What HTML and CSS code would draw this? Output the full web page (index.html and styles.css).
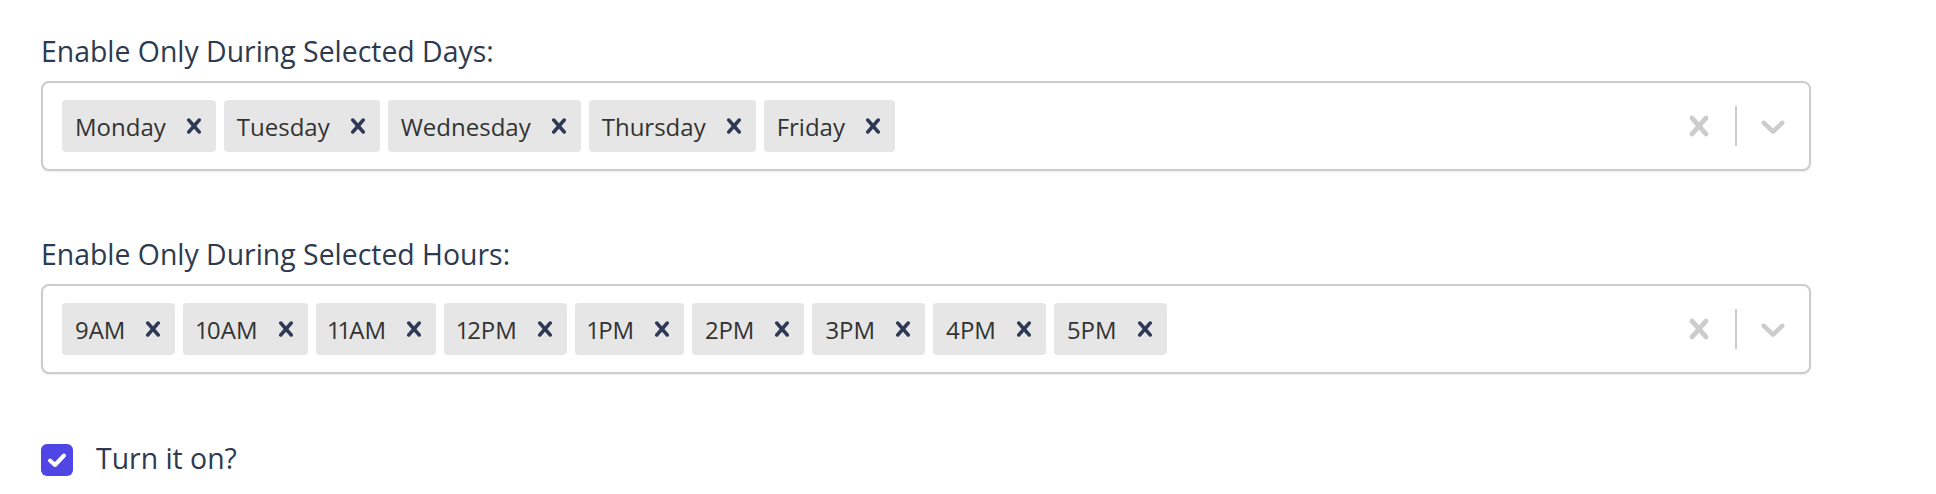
FILE: index.html
```html
<!DOCTYPE html>
<html lang="en">
<head>
    <meta charset="UTF-8">
    <meta name="viewport" content="width=device-width, initial-scale=1.0">
    <title>Schedule</title>
    <link rel="stylesheet" href="styles.css">
</head>
<body>

    <div class="form">
        <div class="field">
            <div class="field-label">Enable Only During Selected Days:</div>
            <div class="select">
                <div class="values">
                    <div class="chip"><span class="chip-label">Monday</span><span class="chip-remove"><svg viewBox="0 0 20 20"><path d="M14.348 14.849c-0.469 0.469-1.229 0.469-1.697 0l-2.651-3.030-2.651 3.029c-0.469 0.469-1.229 0.469-1.697 0-0.469-0.469-0.469-1.229 0-1.697l2.758-3.15-2.759-3.152c-0.469-0.469-0.469-1.228 0-1.697s1.228-0.469 1.697 0l2.652 3.031 2.651-3.031c0.469-0.469 1.228-0.469 1.697 0s0.469 1.229 0 1.697l-2.758 3.152 2.758 3.15c0.469 0.469 0.469 1.229 0 1.698z"/></svg></span></div>
                    <div class="chip"><span class="chip-label">Tuesday</span><span class="chip-remove"><svg viewBox="0 0 20 20"><path d="M14.348 14.849c-0.469 0.469-1.229 0.469-1.697 0l-2.651-3.030-2.651 3.029c-0.469 0.469-1.229 0.469-1.697 0-0.469-0.469-0.469-1.229 0-1.697l2.758-3.15-2.759-3.152c-0.469-0.469-0.469-1.228 0-1.697s1.228-0.469 1.697 0l2.652 3.031 2.651-3.031c0.469-0.469 1.228-0.469 1.697 0s0.469 1.229 0 1.697l-2.758 3.152 2.758 3.15c0.469 0.469 0.469 1.229 0 1.698z"/></svg></span></div>
                    <div class="chip"><span class="chip-label">Wednesday</span><span class="chip-remove"><svg viewBox="0 0 20 20"><path d="M14.348 14.849c-0.469 0.469-1.229 0.469-1.697 0l-2.651-3.030-2.651 3.029c-0.469 0.469-1.229 0.469-1.697 0-0.469-0.469-0.469-1.229 0-1.697l2.758-3.15-2.759-3.152c-0.469-0.469-0.469-1.228 0-1.697s1.228-0.469 1.697 0l2.652 3.031 2.651-3.031c0.469-0.469 1.228-0.469 1.697 0s0.469 1.229 0 1.697l-2.758 3.152 2.758 3.15c0.469 0.469 0.469 1.229 0 1.698z"/></svg></span></div>
                    <div class="chip"><span class="chip-label">Thursday</span><span class="chip-remove"><svg viewBox="0 0 20 20"><path d="M14.348 14.849c-0.469 0.469-1.229 0.469-1.697 0l-2.651-3.030-2.651 3.029c-0.469 0.469-1.229 0.469-1.697 0-0.469-0.469-0.469-1.229 0-1.697l2.758-3.15-2.759-3.152c-0.469-0.469-0.469-1.228 0-1.697s1.228-0.469 1.697 0l2.652 3.031 2.651-3.031c0.469-0.469 1.228-0.469 1.697 0s0.469 1.229 0 1.697l-2.758 3.152 2.758 3.15c0.469 0.469 0.469 1.229 0 1.698z"/></svg></span></div>
                    <div class="chip"><span class="chip-label">Friday</span><span class="chip-remove"><svg viewBox="0 0 20 20"><path d="M14.348 14.849c-0.469 0.469-1.229 0.469-1.697 0l-2.651-3.030-2.651 3.029c-0.469 0.469-1.229 0.469-1.697 0-0.469-0.469-0.469-1.229 0-1.697l2.758-3.15-2.759-3.152c-0.469-0.469-0.469-1.228 0-1.697s1.228-0.469 1.697 0l2.652 3.031 2.651-3.031c0.469-0.469 1.228-0.469 1.697 0s0.469 1.229 0 1.697l-2.758 3.152 2.758 3.15c0.469 0.469 0.469 1.229 0 1.698z"/></svg></span></div>
                </div>
                <div class="indicators">
                    <span class="indicator"><svg viewBox="0 0 20 20"><path d="M14.348 14.849c-0.469 0.469-1.229 0.469-1.697 0l-2.651-3.030-2.651 3.029c-0.469 0.469-1.229 0.469-1.697 0-0.469-0.469-0.469-1.229 0-1.697l2.758-3.15-2.759-3.152c-0.469-0.469-0.469-1.228 0-1.697s1.228-0.469 1.697 0l2.652 3.031 2.651-3.031c0.469-0.469 1.228-0.469 1.697 0s0.469 1.229 0 1.697l-2.758 3.152 2.758 3.15c0.469 0.469 0.469 1.229 0 1.698z"/></svg></span>
                    <span class="separator"></span>
                    <span class="indicator"><svg viewBox="0 0 20 20"><path d="M4.516 7.548c0.436-0.446 1.043-0.481 1.576 0l3.908 3.747 3.908-3.747c0.533-0.481 1.141-0.446 1.574 0 0.436 0.445 0.408 1.197 0 1.615-0.406 0.418-4.695 4.502-4.695 4.502-0.217 0.223-0.502 0.335-0.787 0.335s-0.57-0.112-0.789-0.335c0 0-4.287-4.084-4.695-4.502s-0.436-1.17 0-1.615z"/></svg></span>
                </div>
            </div>
        </div>

        <div class="field">
            <div class="field-label">Enable Only During Selected Hours:</div>
            <div class="select">
                <div class="values">
                    <div class="chip"><span class="chip-label">9AM</span><span class="chip-remove"><svg viewBox="0 0 20 20"><path d="M14.348 14.849c-0.469 0.469-1.229 0.469-1.697 0l-2.651-3.030-2.651 3.029c-0.469 0.469-1.229 0.469-1.697 0-0.469-0.469-0.469-1.229 0-1.697l2.758-3.15-2.759-3.152c-0.469-0.469-0.469-1.228 0-1.697s1.228-0.469 1.697 0l2.652 3.031 2.651-3.031c0.469-0.469 1.228-0.469 1.697 0s0.469 1.229 0 1.697l-2.758 3.152 2.758 3.15c0.469 0.469 0.469 1.229 0 1.698z"/></svg></span></div>
                    <div class="chip"><span class="chip-label">10AM</span><span class="chip-remove"><svg viewBox="0 0 20 20"><path d="M14.348 14.849c-0.469 0.469-1.229 0.469-1.697 0l-2.651-3.030-2.651 3.029c-0.469 0.469-1.229 0.469-1.697 0-0.469-0.469-0.469-1.229 0-1.697l2.758-3.15-2.759-3.152c-0.469-0.469-0.469-1.228 0-1.697s1.228-0.469 1.697 0l2.652 3.031 2.651-3.031c0.469-0.469 1.228-0.469 1.697 0s0.469 1.229 0 1.697l-2.758 3.152 2.758 3.15c0.469 0.469 0.469 1.229 0 1.698z"/></svg></span></div>
                    <div class="chip"><span class="chip-label">11AM</span><span class="chip-remove"><svg viewBox="0 0 20 20"><path d="M14.348 14.849c-0.469 0.469-1.229 0.469-1.697 0l-2.651-3.030-2.651 3.029c-0.469 0.469-1.229 0.469-1.697 0-0.469-0.469-0.469-1.229 0-1.697l2.758-3.15-2.759-3.152c-0.469-0.469-0.469-1.228 0-1.697s1.228-0.469 1.697 0l2.652 3.031 2.651-3.031c0.469-0.469 1.228-0.469 1.697 0s0.469 1.229 0 1.697l-2.758 3.152 2.758 3.15c0.469 0.469 0.469 1.229 0 1.698z"/></svg></span></div>
                    <div class="chip"><span class="chip-label">12PM</span><span class="chip-remove"><svg viewBox="0 0 20 20"><path d="M14.348 14.849c-0.469 0.469-1.229 0.469-1.697 0l-2.651-3.030-2.651 3.029c-0.469 0.469-1.229 0.469-1.697 0-0.469-0.469-0.469-1.229 0-1.697l2.758-3.15-2.759-3.152c-0.469-0.469-0.469-1.228 0-1.697s1.228-0.469 1.697 0l2.652 3.031 2.651-3.031c0.469-0.469 1.228-0.469 1.697 0s0.469 1.229 0 1.697l-2.758 3.152 2.758 3.15c0.469 0.469 0.469 1.229 0 1.698z"/></svg></span></div>
                    <div class="chip"><span class="chip-label">1PM</span><span class="chip-remove"><svg viewBox="0 0 20 20"><path d="M14.348 14.849c-0.469 0.469-1.229 0.469-1.697 0l-2.651-3.030-2.651 3.029c-0.469 0.469-1.229 0.469-1.697 0-0.469-0.469-0.469-1.229 0-1.697l2.758-3.15-2.759-3.152c-0.469-0.469-0.469-1.228 0-1.697s1.228-0.469 1.697 0l2.652 3.031 2.651-3.031c0.469-0.469 1.228-0.469 1.697 0s0.469 1.229 0 1.697l-2.758 3.152 2.758 3.15c0.469 0.469 0.469 1.229 0 1.698z"/></svg></span></div>
                    <div class="chip"><span class="chip-label">2PM</span><span class="chip-remove"><svg viewBox="0 0 20 20"><path d="M14.348 14.849c-0.469 0.469-1.229 0.469-1.697 0l-2.651-3.030-2.651 3.029c-0.469 0.469-1.229 0.469-1.697 0-0.469-0.469-0.469-1.229 0-1.697l2.758-3.15-2.759-3.152c-0.469-0.469-0.469-1.228 0-1.697s1.228-0.469 1.697 0l2.652 3.031 2.651-3.031c0.469-0.469 1.228-0.469 1.697 0s0.469 1.229 0 1.697l-2.758 3.152 2.758 3.15c0.469 0.469 0.469 1.229 0 1.698z"/></svg></span></div>
                    <div class="chip"><span class="chip-label">3PM</span><span class="chip-remove"><svg viewBox="0 0 20 20"><path d="M14.348 14.849c-0.469 0.469-1.229 0.469-1.697 0l-2.651-3.030-2.651 3.029c-0.469 0.469-1.229 0.469-1.697 0-0.469-0.469-0.469-1.229 0-1.697l2.758-3.15-2.759-3.152c-0.469-0.469-0.469-1.228 0-1.697s1.228-0.469 1.697 0l2.652 3.031 2.651-3.031c0.469-0.469 1.228-0.469 1.697 0s0.469 1.229 0 1.697l-2.758 3.152 2.758 3.15c0.469 0.469 0.469 1.229 0 1.698z"/></svg></span></div>
                    <div class="chip"><span class="chip-label">4PM</span><span class="chip-remove"><svg viewBox="0 0 20 20"><path d="M14.348 14.849c-0.469 0.469-1.229 0.469-1.697 0l-2.651-3.030-2.651 3.029c-0.469 0.469-1.229 0.469-1.697 0-0.469-0.469-0.469-1.229 0-1.697l2.758-3.15-2.759-3.152c-0.469-0.469-0.469-1.228 0-1.697s1.228-0.469 1.697 0l2.652 3.031 2.651-3.031c0.469-0.469 1.228-0.469 1.697 0s0.469 1.229 0 1.697l-2.758 3.152 2.758 3.15c0.469 0.469 0.469 1.229 0 1.698z"/></svg></span></div>
                    <div class="chip"><span class="chip-label">5PM</span><span class="chip-remove"><svg viewBox="0 0 20 20"><path d="M14.348 14.849c-0.469 0.469-1.229 0.469-1.697 0l-2.651-3.030-2.651 3.029c-0.469 0.469-1.229 0.469-1.697 0-0.469-0.469-0.469-1.229 0-1.697l2.758-3.15-2.759-3.152c-0.469-0.469-0.469-1.228 0-1.697s1.228-0.469 1.697 0l2.652 3.031 2.651-3.031c0.469-0.469 1.228-0.469 1.697 0s0.469 1.229 0 1.697l-2.758 3.152 2.758 3.15c0.469 0.469 0.469 1.229 0 1.698z"/></svg></span></div>
                </div>
                <div class="indicators">
                    <span class="indicator"><svg viewBox="0 0 20 20"><path d="M14.348 14.849c-0.469 0.469-1.229 0.469-1.697 0l-2.651-3.030-2.651 3.029c-0.469 0.469-1.229 0.469-1.697 0-0.469-0.469-0.469-1.229 0-1.697l2.758-3.15-2.759-3.152c-0.469-0.469-0.469-1.228 0-1.697s1.228-0.469 1.697 0l2.652 3.031 2.651-3.031c0.469-0.469 1.228-0.469 1.697 0s0.469 1.229 0 1.697l-2.758 3.152 2.758 3.15c0.469 0.469 0.469 1.229 0 1.698z"/></svg></span>
                    <span class="separator"></span>
                    <span class="indicator"><svg viewBox="0 0 20 20"><path d="M4.516 7.548c0.436-0.446 1.043-0.481 1.576 0l3.908 3.747 3.908-3.747c0.533-0.481 1.141-0.446 1.574 0 0.436 0.445 0.408 1.197 0 1.615-0.406 0.418-4.695 4.502-4.695 4.502-0.217 0.223-0.502 0.335-0.787 0.335s-0.57-0.112-0.789-0.335c0 0-4.287-4.084-4.695-4.502s-0.436-1.17 0-1.615z"/></svg></span>
                </div>
            </div>
        </div>

        <label class="check">
            <span class="check-box"><svg viewBox="0 0 32 32"><polyline points="9,16.5 14,21 23,11.5"/></svg></span>
            <span class="check-text">Turn it on?</span>
        </label>
    </div>

</body>
</html>
```

FILE: styles.css
```css
body { margin: 0; font-family: "Open Sans", "Liberation Sans", sans-serif; font-feature-settings: "pnum" 1; background: #fff; }
.form { width: 1770px; padding: 34px 0 0 41px; }

.field { margin-bottom: 66px; }
.field-label { font-size: 28.4px; line-height: 34px; color: #2d3a4f; margin-bottom: 13px; }

.select { display: flex; align-items: center; height: 90px; box-sizing: border-box; border: 2px solid #cccccc; border-radius: 8px; box-shadow: 0 1px 2px rgba(0, 0, 0, 0.08); }
.values { flex: 1; display: flex; gap: 8px; padding: 0 19px; }

.chip { display: flex; align-items: center; height: 52px; background: #e6e6e6; border-radius: 4px; }
.chip-label { padding: 0 6px 0 13px; font-size: 24px; color: #333333; }
.chip-remove { display: flex; padding: 0 7px; }
.chip-remove svg { width: 30px; height: 30px; fill: #2e3a55; }

.indicators { display: flex; align-items: center; }
.indicator { display: flex; padding: 0 16px; }
.indicator svg { width: 40px; height: 40px; fill: #cccccc; }
.separator { width: 2px; height: 40px; background: #cccccc; }

.check { display: flex; align-items: flex-start; gap: 23px; margin-top: 70px; }
.check-box { width: 32px; height: 32px; border-radius: 6px; background: #4f46e5; display: flex; }
.check-box svg { width: 32px; height: 32px; fill: none; stroke: #fff; stroke-width: 4; stroke-linecap: round; stroke-linejoin: round; }
.check-text { font-size: 28.4px; line-height: 28px; color: #2d3a4f; }
```
